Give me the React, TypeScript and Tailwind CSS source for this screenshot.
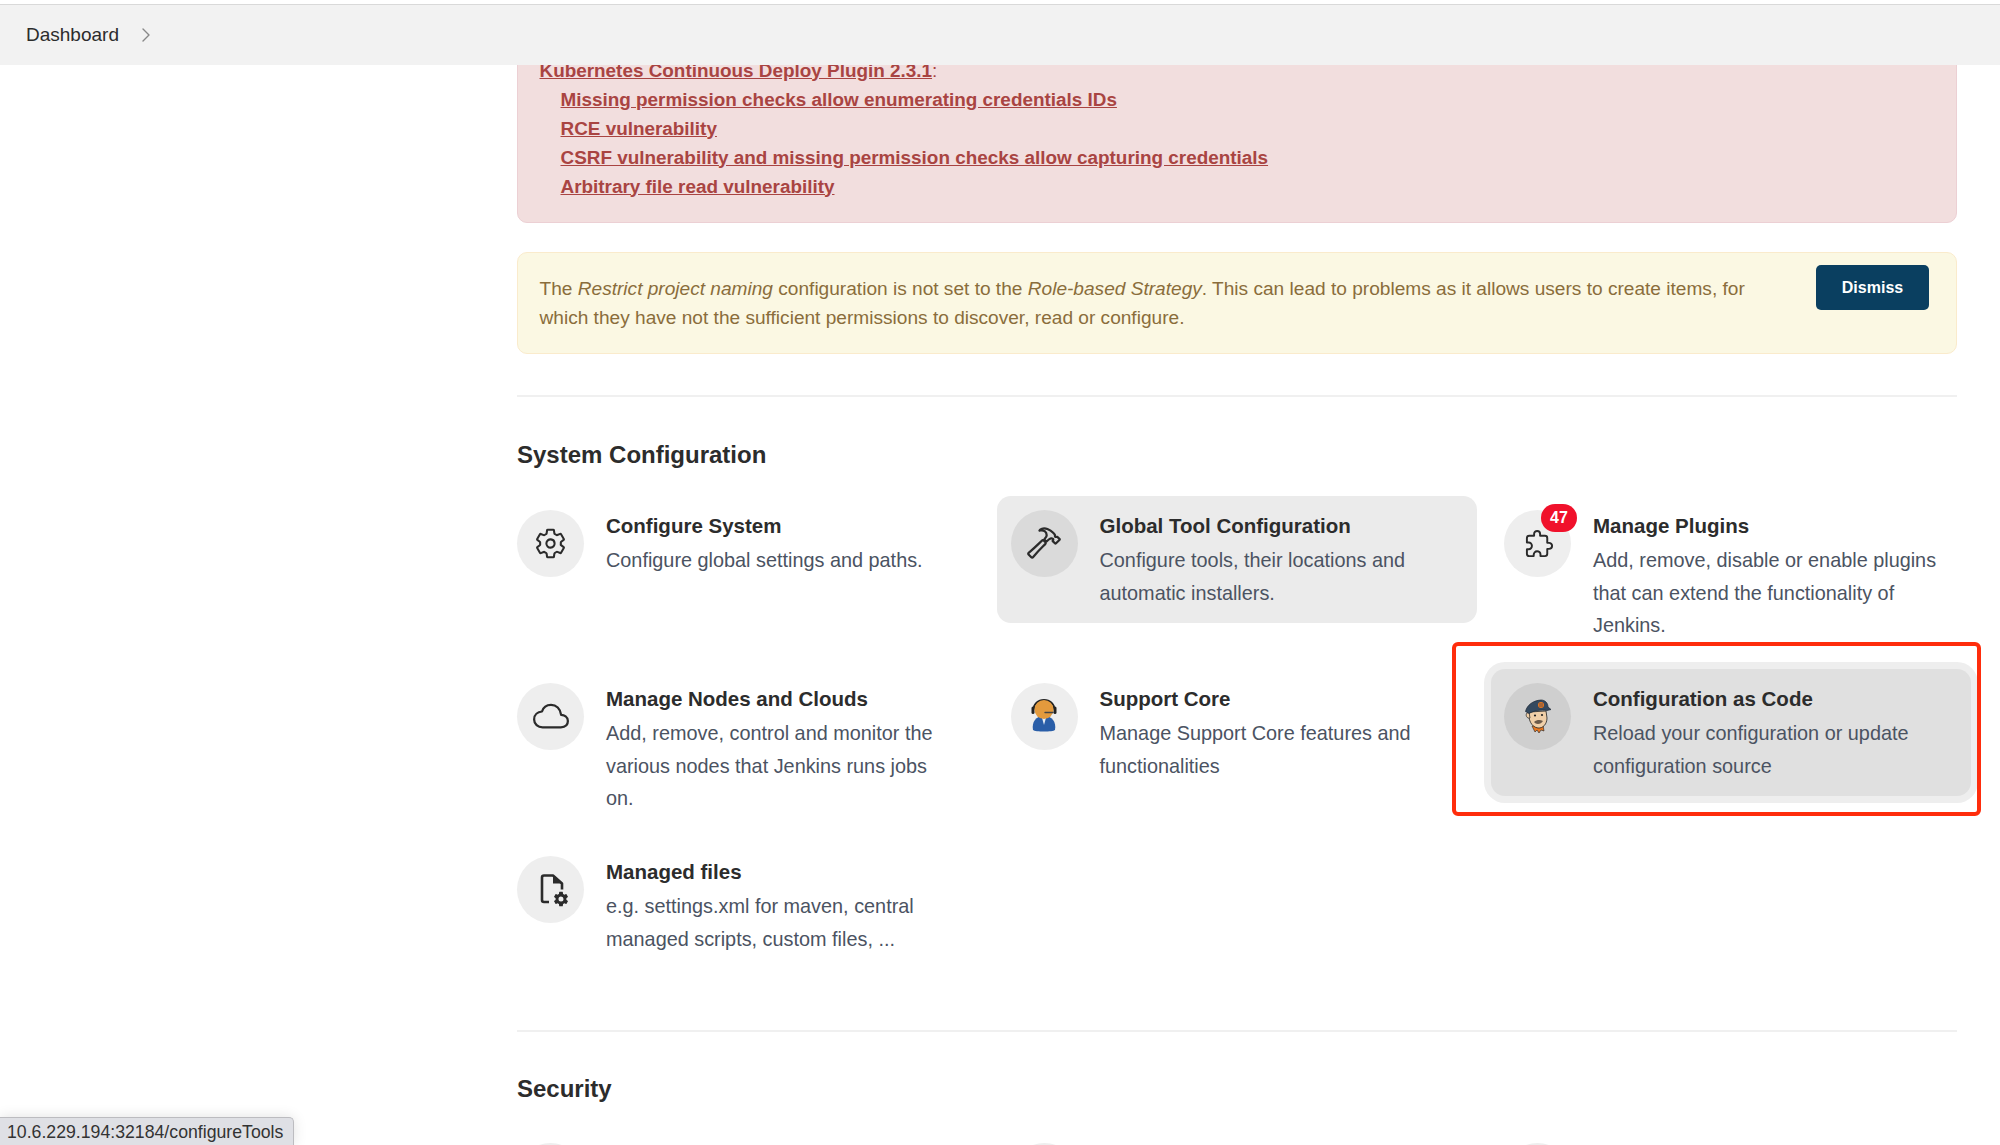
import React from 'react';
import { IoSettingsOutline, IoHammerOutline, IoExtensionPuzzleOutline, IoCloudOutline, IoSettingsSharp } from 'react-icons/io5';
import { ChevronRight } from 'lucide-react';

const FileGearIcon = () => (
  <div className="relative w-[34px] h-[34px]">
    <svg viewBox="0 0 34 34" className="w-[34px] h-[34px]" fill="none">
      <path d="M15 30H10a2 2 0 0 1-2-2V5.500a2 2 0 0 1 2-2h9l9 8v6" stroke="#2b2b2b" strokeWidth="2.600" strokeLinejoin="round" />
      <path d="M19 3.500l9 8h-9z" fill="#2b2b2b" />
    </svg>
    <IoSettingsSharp className="absolute right-[-1px] bottom-[-1px] w-[16px] h-[16px] text-[#2b2b2b]" />
  </div>
);

const SupportIcon = () => (
  <svg viewBox="0 0 34 34" className="w-[34px] h-[34px]">
    <path d="M6 31c-1.500-8 3-14 11-14s12.500 6 11 14c-2 2-20 2-22 0z" fill="#2a5ea8" />
    <path d="M14.500 17l2.500 9 2.500-9z" fill="#e8eef6" />
    <path d="M6.500 11C6.500 5 11 1 17 1s10.500 4 10.500 10" fill="none" stroke="#222" strokeWidth="1.800" />
    <rect x="4.500" y="7.500" width="3" height="7.500" rx="1.500" fill="#222" />
    <rect x="26.500" y="7.500" width="3" height="7.500" rx="1.500" fill="#222" />
    <circle cx="17" cy="10.500" r="9.500" fill="#e39a3d" />
    <path d="M18 13.500h8" stroke="#444" strokeWidth="1.400" strokeLinecap="round" />
  </svg>
);

const JenkinsIcon = () => (
  <svg viewBox="0 0 28 35" className="w-[28px] h-[35px]">
    <path d="M8 27l3 6 2-2 2 3 2-3 3 1-1-6z" fill="#e8771f" stroke="#222" strokeWidth="0.600" />
    <path d="M5 13c-1 7 2 15 9 16 5 .5 9-4 9-10l-1-7z" fill="#f0cfa8" stroke="#222" strokeWidth="0.800" />
    <path d="M3 14c-2 2 0 6 3 5l-1-6z" fill="#f0cfa8" stroke="#222" strokeWidth="0.700" />
    <path d="M1.500 12.500C3 6 9 1.500 17 1c4 0 7 3 7 7l3 2.500-4 1c-6-1-13 0-18 3z" fill="#34495f" stroke="#1c2733" strokeWidth="0.700" />
    <circle cx="17" cy="6" r="3" fill="#e8771f" />
    <path d="M16 4v4M18 4v4" stroke="#34495f" strokeWidth="0.700" />
    <circle cx="11" cy="16.500" r="1.100" fill="#222" />
    <circle cx="18" cy="16" r="1.100" fill="#222" />
    <path d="M10 23c3-2.500 6-2.500 9-1-2 3.500-7 4-9 1z" fill="#6b5a4a" />
  </svg>
);

interface ToolItem {
  title: string;
  desc: string;
  icon: React.ReactNode;
  active?: boolean;
  hovered?: boolean;
  badge?: string;
}

const tools: ToolItem[] = [
  { title: 'Configure System', desc: 'Configure global settings and paths.', icon: <IoSettingsOutline className="w-[33px] h-[33px] text-[#2b2b2b]" /> },
  { title: 'Global Tool Configuration', desc: 'Configure tools, their locations and automatic installers.', icon: <IoHammerOutline className="w-[36px] h-[36px] text-[#2b2b2b]" />, hovered: true },
  { title: 'Manage Plugins', desc: 'Add, remove, disable or enable plugins that can extend the functionality of Jenkins.', icon: <IoExtensionPuzzleOutline className="w-[31px] h-[31px] text-[#2b2b2b] ml-[4px]" />, badge: '47' },
  { title: 'Manage Nodes and Clouds', desc: 'Add, remove, control and monitor the various nodes that Jenkins runs jobs on.', icon: <IoCloudOutline className="w-[36px] h-[36px] text-[#2b2b2b]" /> },
  { title: 'Support Core', desc: 'Manage Support Core features and functionalities', icon: <SupportIcon /> },
  { title: 'Configuration as Code', desc: 'Reload your configuration or update configuration source', icon: <JenkinsIcon />, active: true },
  { title: 'Managed files', desc: 'e.g. settings.xml for maven, central managed scripts, custom files, ...', icon: <FileGearIcon /> },
];

const ToolCard: React.FC<{ item: ToolItem }> = ({ item }) => {
  const cardBg = item.active ? 'bg-[#e0e0e0] ring-[7px] ring-[#eeeeee]' : item.hovered ? 'bg-[#ebebeb]' : '';
  const circleBg = item.active ? 'bg-[#cfcfcf]' : item.hovered ? 'bg-[#dadada]' : 'bg-[#eeeeee]';
  return (
    <div className={`flex items-start gap-[22px] rounded-[14px] p-[13.5px] ${cardBg}`}>
      <div className={`relative w-[67px] h-[67px] shrink-0 rounded-full flex items-center justify-center ${circleBg}`}>
        {item.icon}
        {item.badge && (
          <span className="absolute left-[37px] top-[-6px] w-[36px] h-[28px] rounded-full bg-[#f0112b] text-white text-[16px] font-bold flex items-center justify-center">
            {item.badge}
          </span>
        )}
      </div>
      <div className="w-[345px]">
        <h3 className="text-[20.5px] leading-[32px] font-bold text-[#2c2c2c] mb-[2.5px]">{item.title}</h3>
        <p className="text-[19.85px] leading-[32.5px] text-[#4b5362]">{item.desc}</p>
      </div>
    </div>
  );
};

const vulnerabilities = [
  'Missing permission checks allow enumerating credentials IDs',
  'RCE vulnerability',
  'CSRF vulnerability and missing permission checks allow capturing credentials',
  'Arbitrary file read vulnerability',
];

export default function App() {
  return (
    <div className="relative h-[1145px] overflow-hidden bg-white font-['Liberation_Sans',Arial,sans-serif]">
      <main className="pl-[517px] pr-[43px]">
        <div className="mt-[-29px] rounded-b-[10px] border border-[#ecd0d4] bg-[#f2dede] px-[21.5px] pt-[83.5px] pb-[21px] text-[18.9px] leading-[29px] text-[#a94442]">
          <div><a className="underline font-bold">Kubernetes Continuous Deploy Plugin 2.3.1</a>:</div>
          {vulnerabilities.map((v) => (
            <div key={v} className="pl-[21px]"><a className="underline font-bold">{v}</a></div>
          ))}
        </div>

        <div className="mt-[29px] flex items-start justify-between rounded-[10px] border border-[#faebcc] bg-[#fbf8e3] pl-[21.5px] pr-[27px] py-[12px] h-[102px] text-[19.1px] leading-[29px] text-[#8a6d3b]">
          <p className="w-[1230px] pt-[9.5px]">
            The <em>Restrict project naming</em> configuration is not set to the <em>Role-based Strategy</em>. This can lead to problems as it allows users to create items, for which they have not the sufficient permissions to discover, read or configure.
          </p>
          <button className="w-[113px] h-[45px] rounded-[5px] bg-[#0a3f60] text-white text-[16px] font-bold">Dismiss</button>
        </div>

        <hr className="mt-[41.5px] border-0 h-[2px] bg-[#f0f0f0]" />

        <h2 className="mt-[41.5px] text-[24px] leading-[32px] font-bold text-[#2c2c2c]">System Configuration</h2>

        <div className="mt-[25.5px] ml-[-13.5px] mr-[-13.5px] grid grid-cols-3 gap-x-[13.5px] gap-y-[14px] items-start">
          {tools.map((t) => (
            <ToolCard key={t.title} item={t} />
          ))}
        </div>

        <hr className="mt-[61px] border-0 h-[2px] bg-[#f0f0f0]" />

        <h2 className="mt-[41px] text-[24px] leading-[32px] font-bold text-[#2c2c2c]">Security</h2>

        <div className="mt-[25px] ml-[-13.5px] mr-[-13.5px] grid grid-cols-3 gap-x-[13.5px]">
          {[0, 1, 2].map((i) => (
            <div key={i} className="p-[13.5px]">
              <div className="w-[67px] h-[67px] rounded-full bg-[#eeeeee]" />
            </div>
          ))}
        </div>
      </main>

      {/* sticky breadcrumb bar, sits over the scrolled content */}
      <header className="absolute inset-x-0 top-0 h-[65px] bg-white">
        <div className="h-[61px] mt-[4px] border-t border-[#d9d9d9] bg-[#f2f2f2] flex items-center pl-[26px] text-[19px] text-[#2c2c2c]">
          <span>Dashboard</span>
          <ChevronRight className="ml-[15px] w-[24px] h-[24px] text-[#888888]" strokeWidth={1.4} />
        </div>
      </header>

      {/* annotation box drawn over the screenshot */}
      <div className="absolute left-[1452px] top-[642px] w-[529px] h-[174px] rounded-[6px] border-[4px] border-[#ff2d0c]" />

      {/* browser status bubble */}
      <div className="absolute left-0 bottom-0 h-[28px] w-[294px] rounded-tr-[5px] border-t border-r border-[#bcbcc0] bg-[#dfe0e5] pl-[7px] text-[17.7px] leading-[28px] text-[#333333] shadow-[0_0_14px_rgba(0,0,0,0.12)]">
        10.6.229.194:32184/configureTools
      </div>
    </div>
  );
}
